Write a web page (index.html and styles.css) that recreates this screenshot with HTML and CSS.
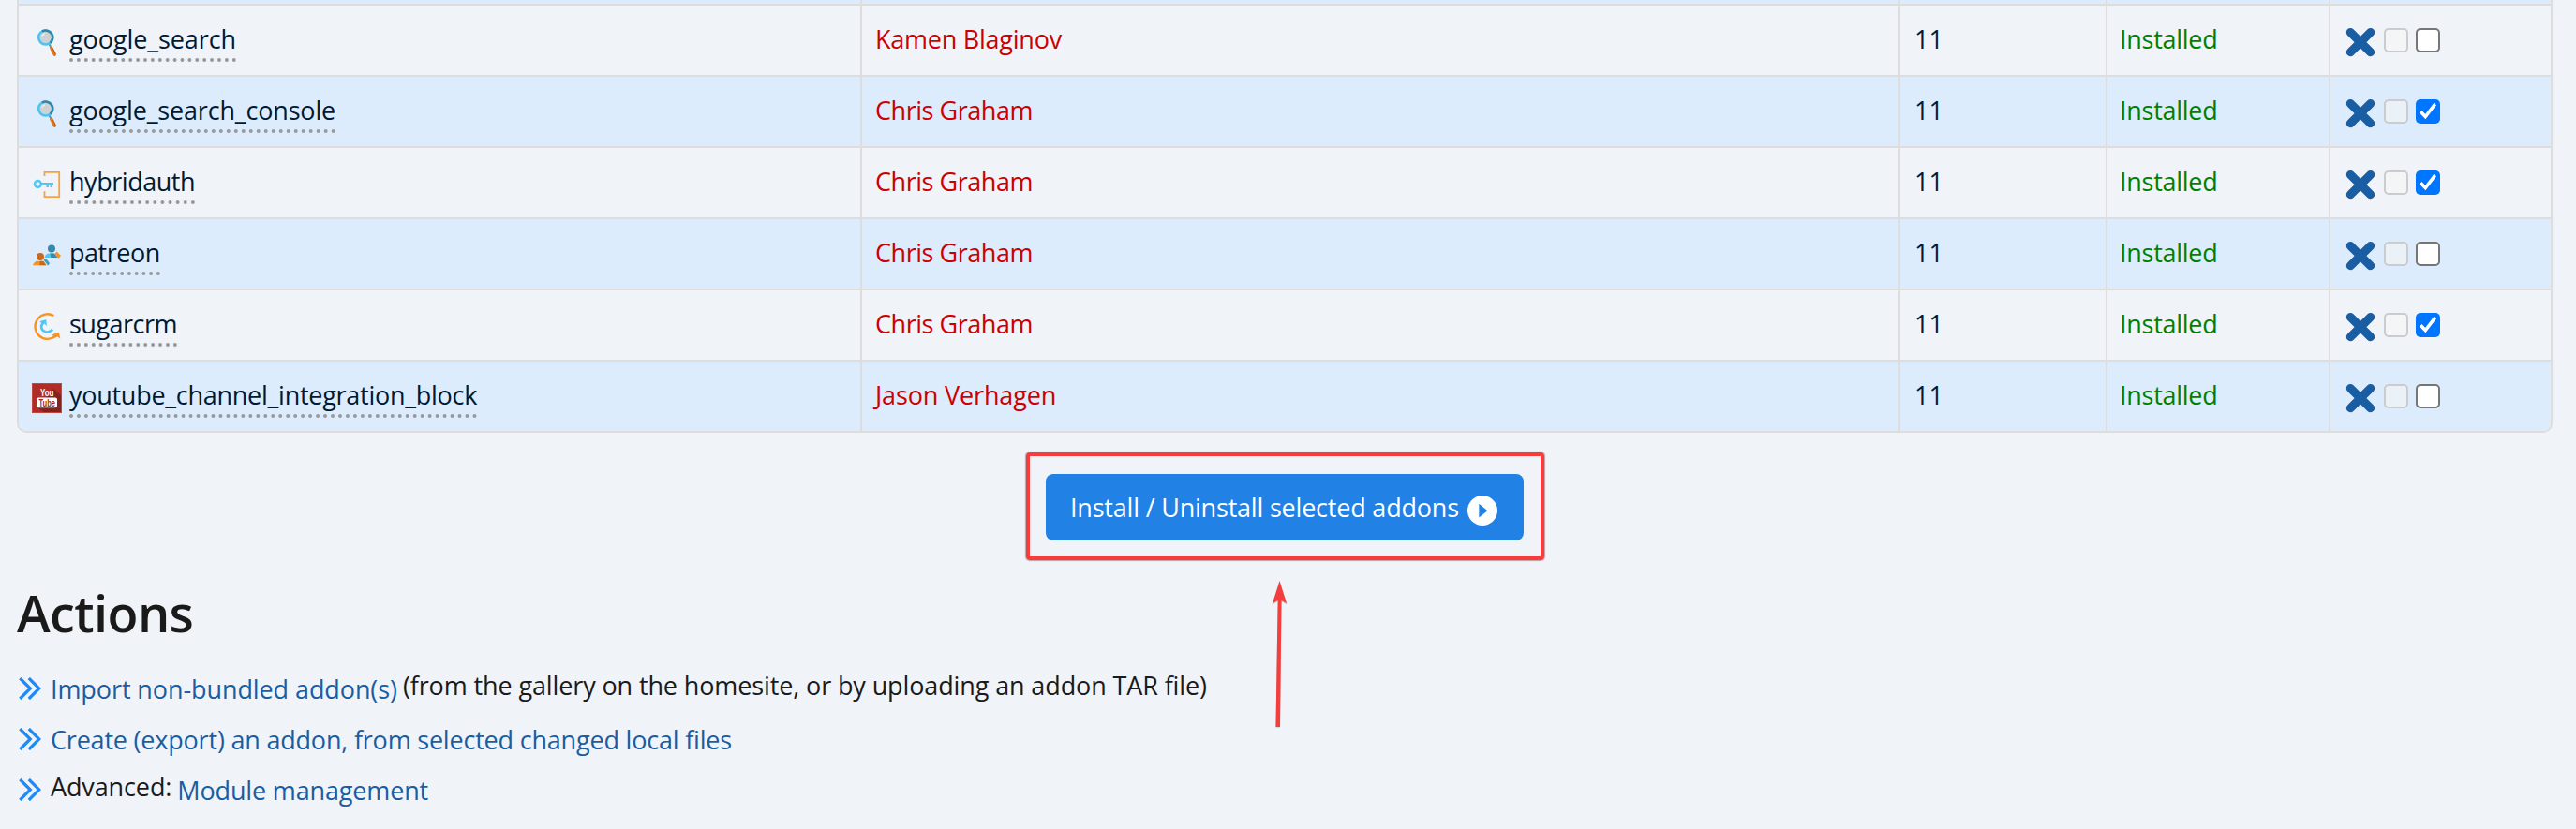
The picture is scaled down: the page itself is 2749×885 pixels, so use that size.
FILE: index.html
```html
<!DOCTYPE html>
<html lang="en">
<head>
<meta charset="utf-8">
<title>Addons</title>
<link rel="stylesheet" href="styles.css">
</head>
<body>
<svg class="defs" width="0" height="0">
  <symbol id="magnifier" viewBox="0 0 32 32">
    <path d="M18 17l3 6" stroke="#3d9fc0" stroke-width="2"/>
    <path d="M20.900 22.500L24.300 29.300" stroke="#e07a15" stroke-width="3.400" stroke-linecap="round"/>
    <path d="M22.200 22.500L25.300 29" stroke="#b85c12" stroke-width="1"/>
    <circle cx="14.700" cy="11" r="7.500" fill="#cfd1d3" stroke="#4cc3f1" stroke-width="2.600"/>
    <path d="M11 4.500A7.500 7.500 0 0 1 19.500 16.800" fill="none" stroke="#3388a8" stroke-width="2.600"/>
    <path d="M10.800 9.500q1-2 3-2.700" fill="none" stroke="#f1f2f3" stroke-width="1.400"/>
  </symbol>
  <symbol id="key" viewBox="0 0 32 32">
    <path d="M13.500 7V2.900H29.200V29.200H13.500V23.200" fill="none" stroke="#f7a23c" stroke-width="1.800"/>
    <circle cx="6.400" cy="15.500" r="3.400" fill="none" stroke="#50c8f5" stroke-width="2.500"/>
    <path d="M9.500 15.300H23M16.700 15.300v3.700M20.800 15.300v3.700" fill="none" stroke="#50c8f5" stroke-width="2.500"/>
  </symbol>
  <symbol id="people" viewBox="0 0 32 32">
    <circle cx="21" cy="8.600" r="4" fill="#3789a9"/>
    <path d="M13.500 18q1-4.500 5-4.500h4L28 18z" fill="#50c8f5"/>
    <path d="M19.500 13.500h4.500L27.500 18h-7z" fill="#3789a9"/>
    <path d="M24.300 14L26.700 11.500L31 16L28.500 19z" fill="#f7931e"/>
    <circle cx="9" cy="17" r="4" fill="#c8691d"/>
    <path d="M1 26.300q1.500-4.500 5-4.500h5L15 26.300z" fill="#f7931e"/>
    <path d="M8.500 21.800h4L15.500 26.300h-7z" fill="#c8691d"/>
    <path d="M12.500 20.500L15.300 19.200L19 24L17.300 26.800z" fill="#3d9fc0"/>
  </symbol>
  <symbol id="cycle" viewBox="0 0 32 32">
    <path d="M23.300 4A13.300 13.300 0 1 0 25 26" fill="none" stroke="#f7931e" stroke-width="2.300"/>
    <path d="M21.500 24.200L28.800 21.800L30.300 28.400L27.500 26.500L24.500 27.500z" fill="#f7931e"/>
    <path d="M12.800 11Q8 15.500 11.800 19.800Q16.500 23.800 22.300 18.800" fill="none" stroke="#50c8f5" stroke-width="2.700"/>
    <path d="M8.500 10L15.200 8.200L16 15.200L13.500 12.500L11 13z" fill="#50c8f5"/>
  </symbol>
  <symbol id="cross" viewBox="0 0 32 32">
    <path d="M5.300 5.500L26.700 26.700M26.700 5.500L5.300 26.700" stroke="#195da2" stroke-width="9" stroke-linecap="round"/>
  </symbol>
  <symbol id="tick" viewBox="0 0 26 26">
    <path d="M5.200 13.200L10.300 18.500L20.700 5.200" fill="none" stroke="#fff" stroke-width="3.500"/>
  </symbol>
  <symbol id="chevrons" viewBox="0 0 24 24">
    <path d="M1.300 1L12.300 12L1.300 23M10.800 1L21.800 12L10.800 23" fill="none" stroke="#1f8af6" stroke-width="3.200"/>
  </symbol>
</svg>

<main>
  <div class="table">
    <div class="row sliver"><div></div><div></div><div></div><div></div><div></div></div>
    <div class="row">
      <div class="name"><svg><use href="#magnifier"/></svg><a class="s09">google_search</a></div>
      <div class="author s24">Kamen Blaginov</div><div>11</div><div class="status">Installed</div>
      <div class="tools"><svg><use href="#cross"/></svg><span class="box off"></span><span class="box"></span></div>
    </div>
    <div class="row alt">
      <div class="name"><svg><use href="#magnifier"/></svg><a class="s18">google_search_console</a></div>
      <div class="author s46">Chris Graham</div><div>11</div><div class="status">Installed</div>
      <div class="tools"><svg><use href="#cross"/></svg><span class="box off"></span><span class="box on"><svg><use href="#tick"/></svg></span></div>
    </div>
    <div class="row">
      <div class="name"><svg><use href="#key"/></svg><a class="s46">hybridauth</a></div>
      <div class="author s46">Chris Graham</div><div>11</div><div class="status">Installed</div>
      <div class="tools"><svg><use href="#cross"/></svg><span class="box off"></span><span class="box on"><svg><use href="#tick"/></svg></span></div>
    </div>
    <div class="row alt">
      <div class="name"><svg><use href="#people"/></svg><a class="s46">patreon</a></div>
      <div class="author s46">Chris Graham</div><div>11</div><div class="status">Installed</div>
      <div class="tools"><svg><use href="#cross"/></svg><span class="box off"></span><span class="box"></span></div>
    </div>
    <div class="row">
      <div class="name"><svg><use href="#cycle"/></svg><a class="s50">sugarcrm</a></div>
      <div class="author s46">Chris Graham</div><div>11</div><div class="status">Installed</div>
      <div class="tools"><svg><use href="#cross"/></svg><span class="box off"></span><span class="box on"><svg><use href="#tick"/></svg></span></div>
    </div>
    <div class="row alt">
      <div class="name"><svg viewBox="0 0 32 32">
        <rect width="32" height="32" fill="#b02c26"/>
        <path d="M23 6L32 14V32H14L6 26z" fill="#86221e"/>
        <rect x=".5" y=".5" width="31" height="31" fill="none" stroke="#c04843"/>
        <rect x="5" y="15.500" width="22" height="10.800" rx="2" fill="#fff"/>
        <text class="yt-text" x="9" y="13.800" textLength="14.500" lengthAdjust="spacingAndGlyphs" fill="#fff">You</text>
        <text class="yt-text" x="7.500" y="25" textLength="17.500" lengthAdjust="spacingAndGlyphs" fill="#a32823">Tube</text>
      </svg><a class="s27">youtube_channel_integration_block</a></div>
      <div class="author s15">Jason Verhagen</div><div>11</div><div class="status">Installed</div>
      <div class="tools"><svg><use href="#cross"/></svg><span class="box off"></span><span class="box"></span></div>
    </div>
  </div>

  <div class="submit">
    <div class="button"><span class="s20">Install / Uninstall selected addons</span>
      <svg viewBox="0 0 32 32"><circle cx="16" cy="16" r="16" fill="#fff"/><path d="M12.300 8.800V23.500L21.500 16.200z" fill="#2181e4"/></svg>
      <i class="frame"></i>
      <svg class="arrow" viewBox="0 0 20 160"><path d="M10.500 2.500L18.500 26.500L12.500 23L11 157.500H6.500L8.700 23L2.500 26.500z" fill="#888" opacity=".5"/><path d="M10.500 1L18 25L12.500 22L11 157H6.500L8.700 22L3 25z" fill="#f53d3d"/></svg>
    </div>
  </div>

  <h2>Actions</h2>
  <ul>
    <li><svg><use href="#chevrons"/></svg><a class="s09">Import non-bundled addon(s)</a><span class="note s12">(from the gallery on the homesite, or by uploading an addon TAR file)</span></li>
    <li><svg><use href="#chevrons"/></svg><a class="s20">Create (export) an addon, from selected changed local files</a></li>
    <li><svg><use href="#chevrons"/></svg><span class="s12">Advanced:</span><a class="s15">Module management</a></li>
  </ul>
</main>
</body>
</html>
```
FILE: styles.css
```css
* { box-sizing: border-box; }
body {
  margin: 0;
  background: #f0f3f8;
  color: #1a1a1a;
  font: 27px/37px "Open Sans", "Noto Sans", sans-serif;
  overflow: hidden;
}
svg { display: block; flex: none; }
.defs { position: absolute; }
main { height: 885px; padding: 0 25px 0 18px; }

.table {
  border: 2px solid #ddd;
  border-top: 0;
  border-radius: 0 0 10px 10px;
  overflow: hidden;
}
.row {
  display: grid;
  grid-template-columns: 898px 1108px 221px 238px 1fr;
  height: 76px;
  border-top: 2px solid #ddd;
}
.row > div {
  padding: 17px 0 0 15px;
  border-left: 2px solid #ddd;
  white-space: nowrap;
  color: #081c33;
}
.row > div:first-child { border-left: 0; }
.alt, .sliver { background: #ddecfd; }
.row.sliver { height: 4px; border-top: 0; }
.row.sliver > div { padding: 0; }

.row > .name { display: flex; align-items: flex-start; gap: 8px; padding-left: 14px; }
.name svg { width: 32px; height: 32px; margin-top: 6px; }
.name a { padding-bottom: 2px; border-bottom: 4px dotted #999; color: #001a33; }
.row > .author { color: #c00; padding-left: 14px; }
.row > .status { color: #008000; letter-spacing: -.27px; padding-left: 13px; }
.yt-text { font: 700 10.500px "Liberation Sans", sans-serif; }

.row > .tools { display: flex; align-items: flex-start; gap: 8px; padding: 23px 0 0 16px; }
.tools > svg { width: 32px; height: 32px; margin-right: 1px; }
.box {
  width: 26px;
  height: 26px;
  margin-top: 1px;
  border: 2px solid #767676;
  border-radius: 5px;
  background: #fff;
}
.box.off { border-color: #cbcccd; background: rgba(248, 248, 244, .5); }
.box.on { border: 0; background: #0075ff; }
.box svg { width: 26px; height: 26px; }

.submit { display: flex; justify-content: center; margin-top: 44px; }
.button {
  position: relative;
  display: flex;
  justify-content: space-between;
  width: 510px;
  height: 71px;
  padding: 0 28px 0 26px;
  border-radius: 8px;
  background: #2181e4;
  color: #fff;
  line-height: 71px;
  white-space: nowrap;
}
.button svg { width: 32px; height: 32px; margin-top: 23px; }
.frame {
  position: absolute;
  left: -21px;
  top: -23px;
  width: 553px;
  height: 115px;
  border: 4px solid #f53d3d;
  border-radius: 4px;
  box-shadow: 0 0 1px 1px rgba(120, 60, 60, .45);
}
.button .arrow {
  position: absolute;
  left: 239px;
  top: 113px;
  width: 20px;
  height: 160px;
  margin: 0;
}

h2 {
  margin: 40px 0 0;
  font-size: 54px;
  line-height: 74px;
  font-weight: 600;
  letter-spacing: -.6px;
}
ul { margin: 17px 0 0; padding: 0; list-style: none; }
li {
  display: flex;
  align-items: flex-start;
  height: 54px;
  padding-left: 2px;
  white-space: nowrap;
}
li svg { width: 24px; height: 24px; margin: 15px 10px 0 0; }
li a { line-height: 55px; color: #195da2; }
li span { line-height: 47px; margin-right: 6px; }
li .note { margin-left: 6px; }

/* Tracking steps */
.s09 { letter-spacing: -.09px; }
.s12 { letter-spacing: -.12px; }
.s15 { letter-spacing: -.15px; }
.s18 { letter-spacing: -.18px; }
.s20 { letter-spacing: -.2px; }
.s24 { letter-spacing: -.24px; }
.s27 { letter-spacing: -.27px; }
.s46 { letter-spacing: -.46px; }
.s50 { letter-spacing: -.5px; }
```
